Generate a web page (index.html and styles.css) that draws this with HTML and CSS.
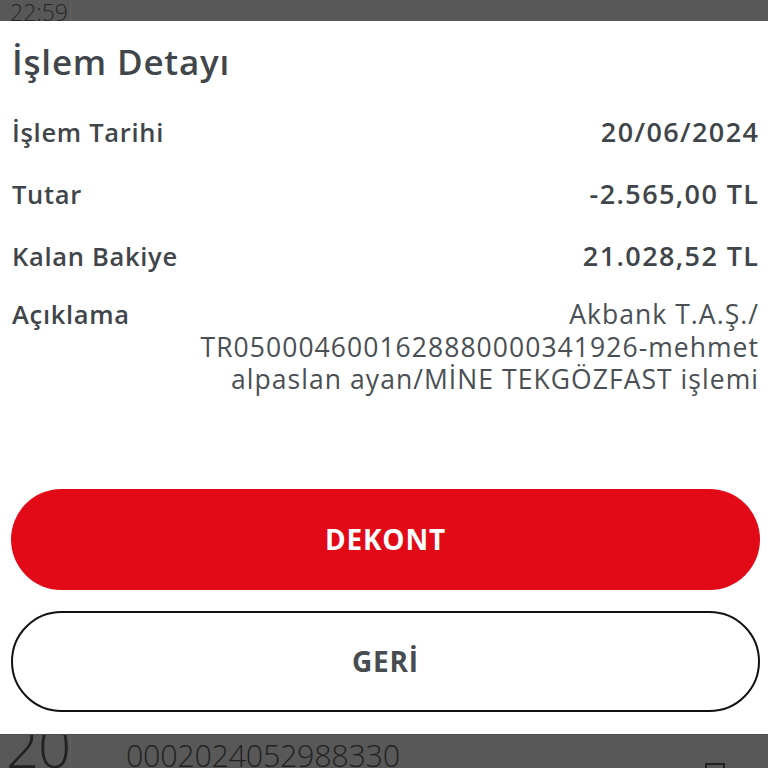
FILE: index.html
```html
<!DOCTYPE html>
<html lang="tr">
<head>
<meta charset="utf-8">
<link rel="stylesheet" href="styles.css">
</head>
<body>
<div class="screen">
  <div class="strip strip-top">
    <span class="time">22:59</span>
    <span class="divider"></span>
  </div>
  <div class="modal">
    <h1 class="title">İşlem Detayı</h1>
    <div class="rows">
      <div class="row"><span class="label">İşlem Tarihi</span><span class="value">20/06/2024</span></div>
      <div class="row"><span class="label">Tutar</span><span class="value">-2.565,00 TL</span></div>
      <div class="row"><span class="label">Kalan Bakiye</span><span class="value">21.028,52 TL</span></div>
      <div class="row row-desc"><span class="label">Açıklama</span><span class="desc">Akbank T.A.Ş./<br>TR0500046001628880000341926-mehmet<br>alpaslan ayan/MİNE TEKGÖZFAST işlemi</span></div>
    </div>
    <div class="actions">
      <button class="btn btn-primary">DEKONT</button>
      <button class="btn btn-outline">GERİ</button>
    </div>
  </div>
  <div class="strip strip-bottom">
    <span class="day">20</span>
    <span class="divider"></span>
    <span class="ref">0002024052988330</span>
    <span class="box"></span>
  </div>
</div>
</body>
</html>
```
FILE: styles.css
```css
* { box-sizing: border-box; }
html, body { margin: 0; padding: 0; }
body {
  width: 768px;
  height: 768px;
  overflow: hidden;
  background: #585858;
  font-family: "Open Sans", "Noto Sans", sans-serif;
  color: #40454a;
}
.screen {
  display: flex;
  flex-direction: column;
  height: 768px;
}
.strip {
  background: #585858;
  display: flex;
  align-items: flex-end;
  overflow: hidden;
  position: relative;
}
.strip-top {
  height: 21px;
  flex: none;
}
.time {
  font-weight: 300;
  font-size: 23px;
  line-height: 23px;
  color: #262626;
  margin-left: 10px;
  margin-bottom: -3px;
  width: 60px;
}
.divider {
  width: 1px;
  align-self: stretch;
  background: #626262;
}
.modal {
  background: #fff;
  height: 713px;
  flex: none;
  padding: 0 8px 0 11px;
  display: flex;
  flex-direction: column;
}
.title {
  margin: 18px 0 0 1px;
  font-size: 35px;
  line-height: 46px;
  font-weight: 600;
  letter-spacing: 0.8px;
  color: #41464b;
}
.rows {
  margin-top: 29px;
  display: flex;
  flex-direction: column;
}
.row {
  display: flex;
  justify-content: space-between;
  align-items: baseline;
  height: 62px;
  padding-right: 2px;
}
.label {
  font-size: 25.5px;
  font-weight: 600;
  line-height: 36px;
  letter-spacing: 0.7px;
  padding-left: 1px;
}
.value {
  font-size: 27px;
  font-weight: 600;
  line-height: 36px;
  letter-spacing: 1.4px;
  margin-right: -1.4px;
}
.row-desc { height: auto; margin-top: -4px; }
.desc {
  text-align: right;
  font-size: 26.5px;
  font-weight: 400;
  line-height: 32.5px;
  letter-spacing: 1.05px;
  margin-right: -1.05px;
  color: #4a4f54;
}
.actions {
  margin-top: 93px;
  display: flex;
  flex-direction: column;
  gap: 21px;
}
.btn {
  height: 101px;
  width: 749px;
  border-radius: 51px;
  font-family: "Open Sans", sans-serif;
  font-size: 28px;
  font-weight: 700;
  letter-spacing: 0.8px;
  cursor: pointer;
}
.btn-primary {
  background: #e20a16;
  color: #fff;
  border: none;
}
.btn-outline {
  background: #fff;
  color: #474c51;
  border: 2px solid #111;
}
.strip-bottom {
  flex: 1;
  align-items: flex-start;
  border-top: 1px solid #4c4c4c;
}
.day {
  font-weight: 300;
  font-size: 58px;
  line-height: 50px;
  margin-top: -14px;
  margin-left: 6px;
  width: 64px;
  color: #222;
  letter-spacing: -1px;
}
.ref {
  font-weight: 300;
  font-size: 30.5px;
  line-height: 34px;
  margin-left: 55px;
  margin-top: 3px;
  color: #222;
  letter-spacing: -0.3px;
}
.box {
  position: absolute;
  left: 705px;
  top: 28px;
  width: 20px;
  height: 10px;
  border: 2px solid #222;
  border-bottom: none;
}
```
